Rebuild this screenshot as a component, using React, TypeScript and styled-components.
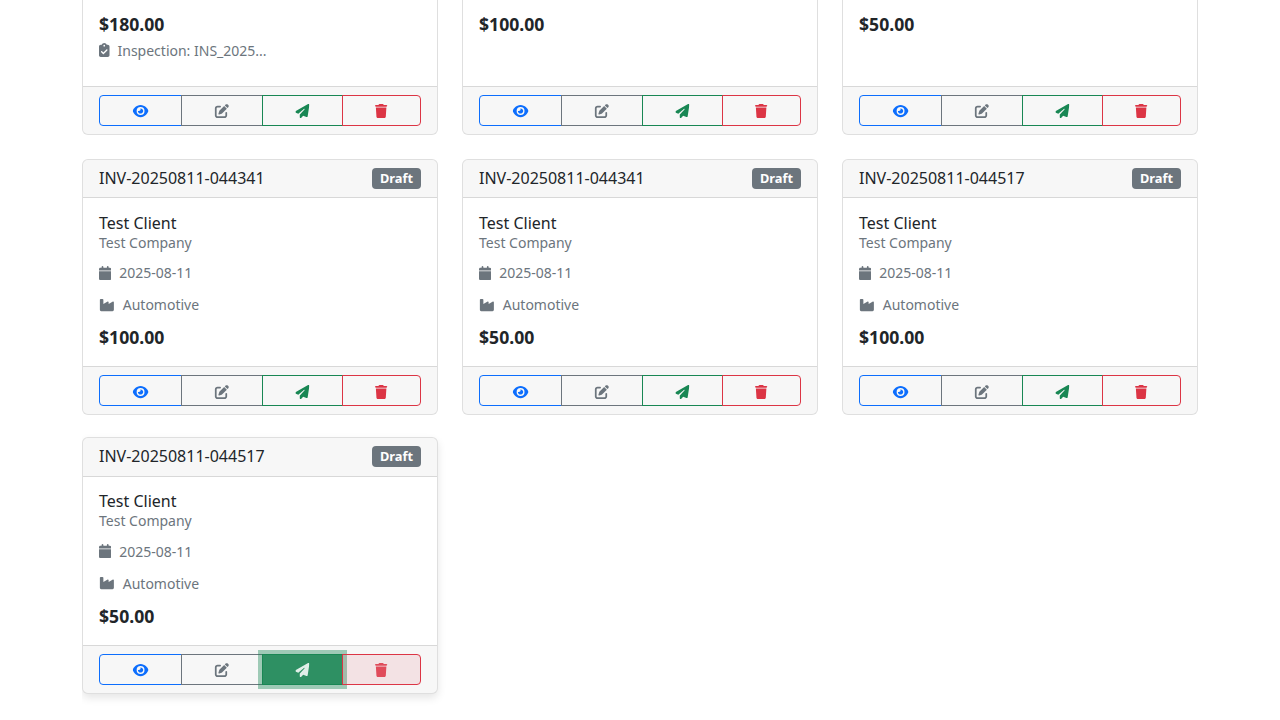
import React from "react";
import styled, { createGlobalStyle, css } from "styled-components";
import {
    FaCalendar,
    FaClipboardCheck,
    FaEye,
    FaIndustry,
    FaPaperPlane,
    FaPenToSquare,
    FaTrash,
} from "react-icons/fa6";

const GlobalStyle = createGlobalStyle`
    html, body {
        margin: 0;
        height: 100%;
        overflow: hidden;
        background: #ffffff;
    }
    body {
        font-family: "Noto Sans", "Liberation Sans", sans-serif;
        font-size: 16px;
        line-height: 1.5;
        color: #212529;
    }
    svg {
        vertical-align: -0.125em;
    }
`;

interface IInvoice {
    number: string;
    date: string;
    amount: string;
    inspection?: string;
}

const invoices: Array<IInvoice> = [
    { number: "INV-20250811-043912", date: "2025-08-11", amount: "$180.00", inspection: "INS_2025..." },
    { number: "INV-20250811-044210", date: "2025-08-11", amount: "$100.00" },
    { number: "INV-20250811-044210", date: "2025-08-11", amount: "$50.00" },
    { number: "INV-20250811-044341", date: "2025-08-11", amount: "$100.00" },
    { number: "INV-20250811-044341", date: "2025-08-11", amount: "$50.00" },
    { number: "INV-20250811-044517", date: "2025-08-11", amount: "$100.00" },
    { number: "INV-20250811-044517", date: "2025-08-11", amount: "$50.00" },
];

const HOVERED_CARD = 6;

const App = () => {
    return (
        <>
            <GlobalStyle />
            <Container>
                <CardGrid>
                    {invoices.map((invoice, key) => {
                        const hovered = key === HOVERED_CARD;
                        return (
                            <Card key={key} $hovered={hovered}>
                                <CardHeader>
                                    <InvoiceNumber>{invoice.number}</InvoiceNumber>
                                    <Badge>Draft</Badge>
                                </CardHeader>
                                <CardBody>
                                    <ClientName>Test Client</ClientName>
                                    <CompanyName>Test Company</CompanyName>
                                    <MetaRow>
                                        <MetaIcon $width={12.25}>
                                            <FaCalendar />
                                        </MetaIcon>
                                        <small>{invoice.date}</small>
                                    </MetaRow>
                                    <MetaRow>
                                        <MetaIcon $width={15.75}>
                                            <FaIndustry />
                                        </MetaIcon>
                                        <small>Automotive</small>
                                    </MetaRow>
                                    <Amount>{invoice.amount}</Amount>
                                    {invoice.inspection && (
                                        <InspectionRow>
                                            <MetaIcon $width={10.5}>
                                                <FaClipboardCheck />
                                            </MetaIcon>
                                            <span>Inspection: {invoice.inspection}</span>
                                        </InspectionRow>
                                    )}
                                </CardBody>
                                <CardFooter>
                                    <ButtonGroup>
                                        <ActionButton $color="#0d6efd" $iconWidth={15.75} $iconShift={0.7} type="button">
                                            <FaEye />
                                        </ActionButton>
                                        <ActionButton $color="#6c757d" $iconWidth={15.75} type="button">
                                            <FaPenToSquare />
                                        </ActionButton>
                                        <ActionButton
                                            $color="#198754"
                                            $iconWidth={14}
                                            $iconShift={-0.6}
                                            $focused={hovered}
                                            type="button"
                                        >
                                            <FaPaperPlane />
                                        </ActionButton>
                                        <ActionButton $color="#dc3545" $iconWidth={12.25} $fading={hovered} type="button">
                                            <FaTrash />
                                        </ActionButton>
                                    </ButtonGroup>
                                </CardFooter>
                            </Card>
                        );
                    })}
                </CardGrid>
            </Container>
        </>
    );
};

export default App;

const Container = styled.div`
    width: 1116px;
    height: 720px;
    margin: 0 auto;
    overflow: hidden;
`;

// the page is scrolled, so the first row starts above the window
const CardGrid = styled.div`
    display: grid;
    grid-template-columns: repeat(3, 356px);
    gap: 24px;
    margin-top: -154.1px;
`;

const Card = styled.div<{ $hovered?: boolean }>`
    display: flex;
    flex-direction: column;
    background: #ffffff;
    border: 1px solid rgba(0, 0, 0, 0.125);
    border-radius: 6px;
    ${(props) =>
        props.$hovered &&
        css`
            transform: translateY(-2px);
            box-shadow: 0 4px 8px rgba(0, 0, 0, 0.1);
        `}
`;

const CardHeader = styled.div`
    display: flex;
    align-items: center;
    justify-content: space-between;
    padding: 8px 16px 8.66px;
    background: rgba(0, 0, 0, 0.03);
    border-bottom: 1px solid rgba(0, 0, 0, 0.125);
    border-radius: 5px 5px 0 0;
`;

const InvoiceNumber = styled.h6`
    margin: 0;
    font-size: 16px;
    font-weight: 400;
    line-height: 1.2;
`;

const Badge = styled.span`
    padding: 4.15px 8px;
    font-size: 12.8px;
    font-weight: 700;
    line-height: 1;
    color: #ffffff;
    background: #6c757d;
    border-radius: 4px;
`;

const CardBody = styled.div`
    flex: 1 1 auto;
    padding: 15.18px 16px 16px;
`;

const ClientName = styled.h6`
    margin: 0;
    font-size: 16px;
    font-weight: 400;
    line-height: 18px;
`;

const CompanyName = styled.small`
    display: block;
    margin-bottom: 7.62px;
    font-size: 14px;
    color: #6c757d;
`;

const MetaRow = styled.div`
    margin-bottom: 8px;
    color: #6c757d;

    small {
        font-size: 14px;
    }
`;

const MetaIcon = styled.span<{ $width: number }>`
    margin-right: 8px;
    font-size: 14px;

    svg {
        width: ${(props) => props.$width}px;
    }
`;

const Amount = styled.div`
    margin-bottom: 1px;
    padding-top: 1px;
    font-size: 17.6px;
    font-weight: 700;
    line-height: 24px;
`;

const InspectionRow = styled.div`
    display: flex;
    align-items: center;
    margin: 3.2px 0 9px;
    font-size: 14px;
    color: #6c757d;
`;

const CardFooter = styled.div`
    padding: 8px 16px;
    background: rgba(0, 0, 0, 0.03);
    border-top: 1px solid rgba(0, 0, 0, 0.125);
    border-radius: 0 0 5px 5px;
`;

const ButtonGroup = styled.div`
    display: flex;
    width: 100%;
`;

const ActionButton = styled.button<{
    $color: string;
    $iconWidth: number;
    $iconShift?: number;
    $focused?: boolean;
    $fading?: boolean;
}>`
    position: relative;
    flex: 1 1 auto;
    margin-left: -1px;
    padding: 4px 8px;
    font-family: inherit;
    font-size: 14px;
    line-height: 1.5;
    color: ${(props) => props.$color};
    background: transparent;
    border: 1px solid ${(props) => props.$color};
    border-radius: 0;

    svg {
        width: ${(props) => props.$iconWidth}px;
        vertical-align: -0.19em;
        transform: translateX(${(props) => props.$iconShift ?? 0}px);
    }

    &:first-child {
        margin-left: 0;
        border-radius: 4px 0 0 4px;
    }
    &:last-child {
        border-radius: 0 4px 4px 0;
    }

    ${(props) =>
        props.$focused &&
        css`
            z-index: 1;
            color: rgba(255, 255, 255, 0.85);
            background: #2e9063;
            box-shadow: 0 0 0 4px rgba(25, 135, 84, 0.4);
        `}
    ${(props) =>
        props.$fading &&
        css`
            z-index: 2;
            color: #e04b5a;
            background: rgba(220, 53, 69, 0.1);
        `}
`;
